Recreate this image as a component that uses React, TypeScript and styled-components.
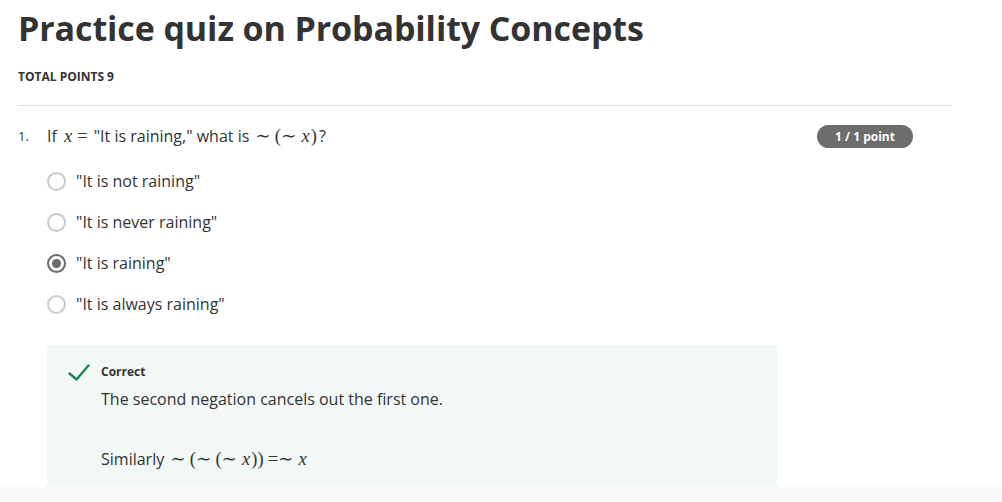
import React from "react";
import styled, { createGlobalStyle } from "styled-components";

const Global = createGlobalStyle`
  html, body { margin: 0; padding: 0; background: #ffffff; }
  body { font-family: "Open Sans", "Noto Sans", sans-serif; color: #333333; }
`;

const Page = styled.main`
  padding: 8px 50px 40px 18px;
  display: flex;
  flex-direction: column;
`;

const Title = styled.h1`
  margin: 0;
  font-size: 34px;
  line-height: 40px;
  font-weight: 700;
  color: #333333;
  letter-spacing: -0.1px;
`;

const TotalPoints = styled.div`
  margin-top: 21px;
  font-size: 12px;
  line-height: 16px;
  font-weight: 700;
  color: #333333;
`;

const Divider = styled.hr`
  margin: 20px 0 0 0;
  border: none;
  height: 1px;
  background: #e1e1e1;
`;

const QuestionRow = styled.div`
  margin-top: 18px;
  display: flex;
  align-items: center;
  height: 24px;
  padding-right: 39px;
`;

const Number = styled.span`
  width: 29px;
  font-size: 13px;
  color: #333333;
`;

const Prompt = styled.div`
  flex: 1;
  font-size: 16px;
  color: #333333;
`;

const Math = styled.span`
  font-family: "Liberation Serif", "DejaVu Serif", serif;
  font-size: 18.5px;
  margin: 0 2px;
`;

const MathVar = styled.i`
  font-family: "Liberation Serif", "DejaVu Serif", serif;
  font-style: italic;
  margin: 0 1px;
`;

const Op = styled.span<{ $left?: number; $right?: number }>`
  display: inline-block;
  margin-left: ${(p) => p.$left ?? 4}px;
  margin-right: ${(p) => p.$right ?? 4}px;
`;

const Badge = styled.span`
  display: inline-flex;
  align-items: center;
  justify-content: center;
  width: 96px;
  height: 23px;
  border-radius: 12px;
  background: #6d6d6d;
  color: #ffffff;
  font-size: 12px;
  font-weight: 700;
`;

const Options = styled.div`
  margin-top: 21px;
  margin-left: 29px;
  display: flex;
  flex-direction: column;
  gap: 17px;
`;

const Option = styled.label`
  display: flex;
  align-items: center;
  gap: 10px;
  height: 24px;
  font-size: 16px;
  color: #333333;
`;

const Radio = styled.span<{ $checked?: boolean }>`
  box-sizing: border-box;
  width: 19px;
  height: 19px;
  border-radius: 50%;
  border: ${(p) => (p.$checked ? "2px solid #6a6a6a" : "2px solid #cacaca")};
  display: flex;
  align-items: center;
  justify-content: center;
  background: #ffffff;
  &::after {
    content: "";
    width: 9px;
    height: 9px;
    border-radius: 50%;
    background: ${(p) => (p.$checked ? "#6a6a6a" : "transparent")};
  }
`;

const Feedback = styled.section`
  margin-top: 29px;
  margin-left: 29px;
  width: 730px;
  box-sizing: border-box;
  background: #f2f8f6;
  padding: 18px 20px 15px 21px;
  display: flex;
  gap: 11px;
`;

const CheckIcon = styled.svg`
  flex: none;
  width: 22px;
  height: 18px;
  margin-top: 1px;
`;

const FeedbackBody = styled.div`
  display: flex;
  flex-direction: column;
`;

const Verdict = styled.div`
  font-size: 12px;
  line-height: 18px;
  font-weight: 700;
  color: #333333;
`;

const Explanation = styled.p<{ $gap: number }>`
  margin: ${(p) => p.$gap}px 0 0 0;
  font-size: 16px;
  line-height: 24px;
  color: #333333;
`;

const BottomFade = styled.div`
  position: fixed;
  left: 0;
  right: 0;
  bottom: 0;
  height: 18px;
  background: linear-gradient(to bottom, rgba(249, 249, 249, 0) 0%, #f9f9f9 20%, #f8f8f8 100%);
  pointer-events: none;
`;

export default function App() {
  return (
    <>
      <Global />
      <Page>
        <Title>Practice quiz on Probability Concepts</Title>
        <TotalPoints>TOTAL POINTS 9</TotalPoints>
        <Divider />
        <QuestionRow>
          <Number>1.</Number>
          <Prompt>
            If <Math><MathVar>x</MathVar><Op>=</Op></Math>"It is raining," what is
            <Math>
              <Op>∼</Op>(<Op $left={0}>∼</Op><MathVar>x</MathVar>)
            </Math>
            ?
          </Prompt>
          <Badge>1 / 1 point</Badge>
        </QuestionRow>
        <Options>
          <Option>
            <Radio />
            "It is not raining"
          </Option>
          <Option>
            <Radio />
            "It is never raining"
          </Option>
          <Option>
            <Radio $checked />
            "It is raining"
          </Option>
          <Option>
            <Radio />
            "It is always raining"
          </Option>
        </Options>
        <Feedback>
          <CheckIcon viewBox="0 0 22 18">
            <path d="M1.5 9.5 L8.5 15.5 L20.5 1.5" fill="none" stroke="#1f8354" strokeWidth="2.4" strokeLinecap="round" strokeLinejoin="round" />
          </CheckIcon>
          <FeedbackBody>
            <Verdict>Correct</Verdict>
            <Explanation $gap={6}>The second negation cancels out the first one.</Explanation>
            <Explanation $gap={36}>
              Similarly
              <Math>
                <Op>∼</Op>(<Op $left={0}>∼</Op>(<Op $left={0}>∼</Op><MathVar>x</MathVar>))<Op $right={0}>=</Op><Op $left={0}>∼</Op><MathVar>x</MathVar>
              </Math>
            </Explanation>
          </FeedbackBody>
        </Feedback>
      </Page>
      <BottomFade />
    </>
  );
}
